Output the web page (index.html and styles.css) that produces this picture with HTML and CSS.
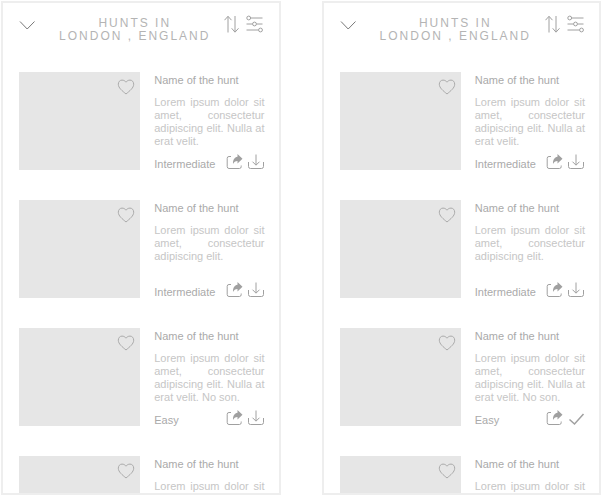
FILE: index.html
```html
<!DOCTYPE html>
<html lang="en">
<head>
<meta charset="utf-8">
<title>Hunts</title>
<link rel="stylesheet" href="styles.css">
</head>
<body>
<svg class="sprite" aria-hidden="true">
  <symbol id="chevron" viewBox="0 0 16 18"><path d="M1 6.500 8.200 14 15.500 6.500"/></symbol>
  <symbol id="sort" viewBox="0 0 16 18"><path d="M4 17.500V1.500M.5 5.200 4 1.300 7.500 5.200M11 1V17M7.700 13.300 11 17.200 14.500 13.300"/></symbol>
  <symbol id="filter" viewBox="0 0 18 18"><path d="M4.500 3H16.500M.5 9H6.500M10.500 9H16.500M.5 15H12.500"/><circle cx="2.700" cy="3" r="1.900"/><circle cx="8.500" cy="9" r="1.900"/><circle cx="14.500" cy="15" r="1.900"/></symbol>
  <symbol id="heart" viewBox="0 0 18 16"><path d="M9 15C5.500 12 1.300 9 1.300 5.200 1.300 2.800 2.900 1.100 5 1.100 6.800 1.100 8.200 2 9 3.200 9.800 2 11.200 1.100 13 1.100 15.100 1.100 16.700 2.800 16.700 5.200 16.700 9 12.500 12 9 15Z"/></symbol>
  <symbol id="share" viewBox="0 0 18 16"><path d="M6 2.500H4Q2.200 2.500 2.200 4.300V12.500Q2.200 14.500 4 14.500H14.500Q16.200 14.500 16.200 12.500V11.500"/><path class="solid" d="M12.500 0 17.500 4.700 12.500 9.400V7C10.200 7 9 8 8 10 7.800 6 9.500 3 12.500 2.700Z"/></symbol>
  <symbol id="download" viewBox="0 0 18 16"><path d="M1.500 8V12.500Q1.500 14.500 3.500 14.500H14.500Q16.500 14.500 16.500 12.500V8M9 .5V11M5.500 7.700 9 11.200 12.500 7.700"/></symbol>
  <symbol id="check" viewBox="0 0 18 16"><path class="bold" d="M2.500 9.500 7.500 14 16.500 4"/></symbol>
</svg>

<main class="screens">
  <section class="screen" aria-label="Hunts, not downloaded">
    <header class="bar">
      <button class="icon-button" aria-label="Collapse"><svg class="icon narrow strong"><use href="#chevron"/></svg></button>
      <h1 class="bar-title">HUNTS IN<br>LONDON , ENGLAND</h1>
      <div class="actions">
        <button class="icon-button" aria-label="Sort"><svg class="icon narrow"><use href="#sort"/></svg></button>
        <button class="icon-button" aria-label="Filter"><svg class="icon"><use href="#filter"/></svg></button>
      </div>
    </header>
    <div class="list">
      <article class="card">
        <div class="photo"><button class="icon-button" aria-label="Favourite"><svg class="icon short faint"><use href="#heart"/></svg></button></div>
        <div class="details">
          <h2 class="name">Name of the hunt</h2>
          <p class="text">Lorem ipsum dolor sit amet, consectetur adipiscing elit. Nulla at erat velit.</p>
          <footer class="foot"><span>Intermediate</span><div class="tools">
            <button class="icon-button" aria-label="Share"><svg class="icon short"><use href="#share"/></svg></button>
            <button class="icon-button" aria-label="Download"><svg class="icon short"><use href="#download"/></svg></button></div></footer>
        </div>
      </article>
      <article class="card">
        <div class="photo"><button class="icon-button" aria-label="Favourite"><svg class="icon short faint"><use href="#heart"/></svg></button></div>
        <div class="details">
          <h2 class="name">Name of the hunt</h2>
          <p class="text">Lorem ipsum dolor sit amet, consectetur adipiscing elit.</p>
          <footer class="foot"><span>Intermediate</span><div class="tools">
            <button class="icon-button" aria-label="Share"><svg class="icon short"><use href="#share"/></svg></button>
            <button class="icon-button" aria-label="Download"><svg class="icon short"><use href="#download"/></svg></button></div></footer>
        </div>
      </article>
      <article class="card">
        <div class="photo"><button class="icon-button" aria-label="Favourite"><svg class="icon short faint"><use href="#heart"/></svg></button></div>
        <div class="details">
          <h2 class="name">Name of the hunt</h2>
          <p class="text">Lorem ipsum dolor sit amet, consectetur adipiscing elit. Nulla at erat velit. No son.</p>
          <footer class="foot"><span>Easy</span><div class="tools">
            <button class="icon-button" aria-label="Share"><svg class="icon short"><use href="#share"/></svg></button>
            <button class="icon-button" aria-label="Download"><svg class="icon short"><use href="#download"/></svg></button></div></footer>
        </div>
      </article>
      <article class="card">
        <div class="photo"><button class="icon-button" aria-label="Favourite"><svg class="icon short faint"><use href="#heart"/></svg></button></div>
        <div class="details">
          <h2 class="name">Name of the hunt</h2>
          <p class="text fill">Lorem ipsum dolor sit</p>
        </div>
      </article>
    </div>
  </section>

  <section class="screen" aria-label="Hunts, one downloaded">
    <header class="bar">
      <button class="icon-button" aria-label="Collapse"><svg class="icon narrow strong"><use href="#chevron"/></svg></button>
      <h1 class="bar-title">HUNTS IN<br>LONDON , ENGLAND</h1>
      <div class="actions">
        <button class="icon-button" aria-label="Sort"><svg class="icon narrow"><use href="#sort"/></svg></button>
        <button class="icon-button" aria-label="Filter"><svg class="icon"><use href="#filter"/></svg></button>
      </div>
    </header>
    <div class="list">
      <article class="card">
        <div class="photo"><button class="icon-button" aria-label="Favourite"><svg class="icon short faint"><use href="#heart"/></svg></button></div>
        <div class="details">
          <h2 class="name">Name of the hunt</h2>
          <p class="text">Lorem ipsum dolor sit amet, consectetur adipiscing elit. Nulla at erat velit.</p>
          <footer class="foot"><span>Intermediate</span><div class="tools">
            <button class="icon-button" aria-label="Share"><svg class="icon short"><use href="#share"/></svg></button>
            <button class="icon-button" aria-label="Download"><svg class="icon short"><use href="#download"/></svg></button></div></footer>
        </div>
      </article>
      <article class="card">
        <div class="photo"><button class="icon-button" aria-label="Favourite"><svg class="icon short faint"><use href="#heart"/></svg></button></div>
        <div class="details">
          <h2 class="name">Name of the hunt</h2>
          <p class="text">Lorem ipsum dolor sit amet, consectetur adipiscing elit.</p>
          <footer class="foot"><span>Intermediate</span><div class="tools">
            <button class="icon-button" aria-label="Share"><svg class="icon short"><use href="#share"/></svg></button>
            <button class="icon-button" aria-label="Download"><svg class="icon short"><use href="#download"/></svg></button></div></footer>
        </div>
      </article>
      <article class="card">
        <div class="photo"><button class="icon-button" aria-label="Favourite"><svg class="icon short faint"><use href="#heart"/></svg></button></div>
        <div class="details">
          <h2 class="name">Name of the hunt</h2>
          <p class="text">Lorem ipsum dolor sit amet, consectetur adipiscing elit. Nulla at erat velit. No son.</p>
          <footer class="foot"><span>Easy</span><div class="tools">
            <button class="icon-button" aria-label="Share"><svg class="icon short"><use href="#share"/></svg></button>
            <button class="icon-button" aria-label="Downloaded"><svg class="icon short"><use href="#check"/></svg></button></div></footer>
        </div>
      </article>
      <article class="card">
        <div class="photo"><button class="icon-button" aria-label="Favourite"><svg class="icon short faint"><use href="#heart"/></svg></button></div>
        <div class="details">
          <h2 class="name">Name of the hunt</h2>
          <p class="text fill">Lorem ipsum dolor sit</p>
        </div>
      </article>
    </div>
  </section>
</main>
</body>
</html>
```
FILE: styles.css
```css
* { box-sizing: border-box; }

body {
  margin: 0;
  background: #fff;
  color: #aaa;
  font-family: "Liberation Sans", Arial, sans-serif;
  font-size: 11px;
}

h1, h2, p { margin: 0; font-weight: 400; }

.sprite { position: absolute; width: 0; height: 0; }

.screens {
  display: grid;
  grid-template-columns: 1fr 1fr;
  gap: 41px;
  height: 100vh;
  padding: 1px;
}

.screen {
  overflow: hidden;
  border: 2px solid #eee;
  padding: 12px 14px 0 16px;
}

.bar {
  display: flex;
  justify-content: space-between;
  align-items: flex-start;
  margin-bottom: 29px;
}

.bar-title {
  padding: 2px 0 0 10px;
  color: #b4b4b4;
  font-size: 12px;
  line-height: 13px;
  letter-spacing: 2px;
  text-align: center;
}

.actions { display: flex; gap: 6px; }

.icon-button {
  display: block;
  padding: 0;
  border: 0;
  background: none;
  color: #a0a0a0;
}

.icon {
  display: block;
  width: 18px;
  height: 18px;
  fill: none;
  stroke: currentColor;
  stroke-width: 1;
}

.narrow { width: 16px; }
.short { height: 16px; }
.strong { color: #777; }
.faint { color: #aaa; }
.solid { fill: currentColor; stroke: none; }
.bold { stroke-width: 1.500; }

.list { display: grid; gap: 30px; }

.card {
  display: grid;
  grid-template-columns: 11fr 10fr;
  gap: 14px;
  height: 98px;
}

.photo {
  display: flex;
  justify-content: flex-end;
  align-items: flex-start;
  padding: 7px 5px;
  background: #e6e6e6;
}

.details { display: flex; flex-direction: column; }

.name {
  margin-bottom: 8px;
  font-size: 11px;
  line-height: 16px;
}

.text {
  color: #c6c6c6;
  line-height: 13px;
  text-align: justify;
}

.fill { text-align-last: justify; }

.foot {
  display: flex;
  justify-content: space-between;
  align-items: flex-end;
  margin-top: auto;
  line-height: 12px;
}

.tools { display: flex; gap: 4px; }
```
